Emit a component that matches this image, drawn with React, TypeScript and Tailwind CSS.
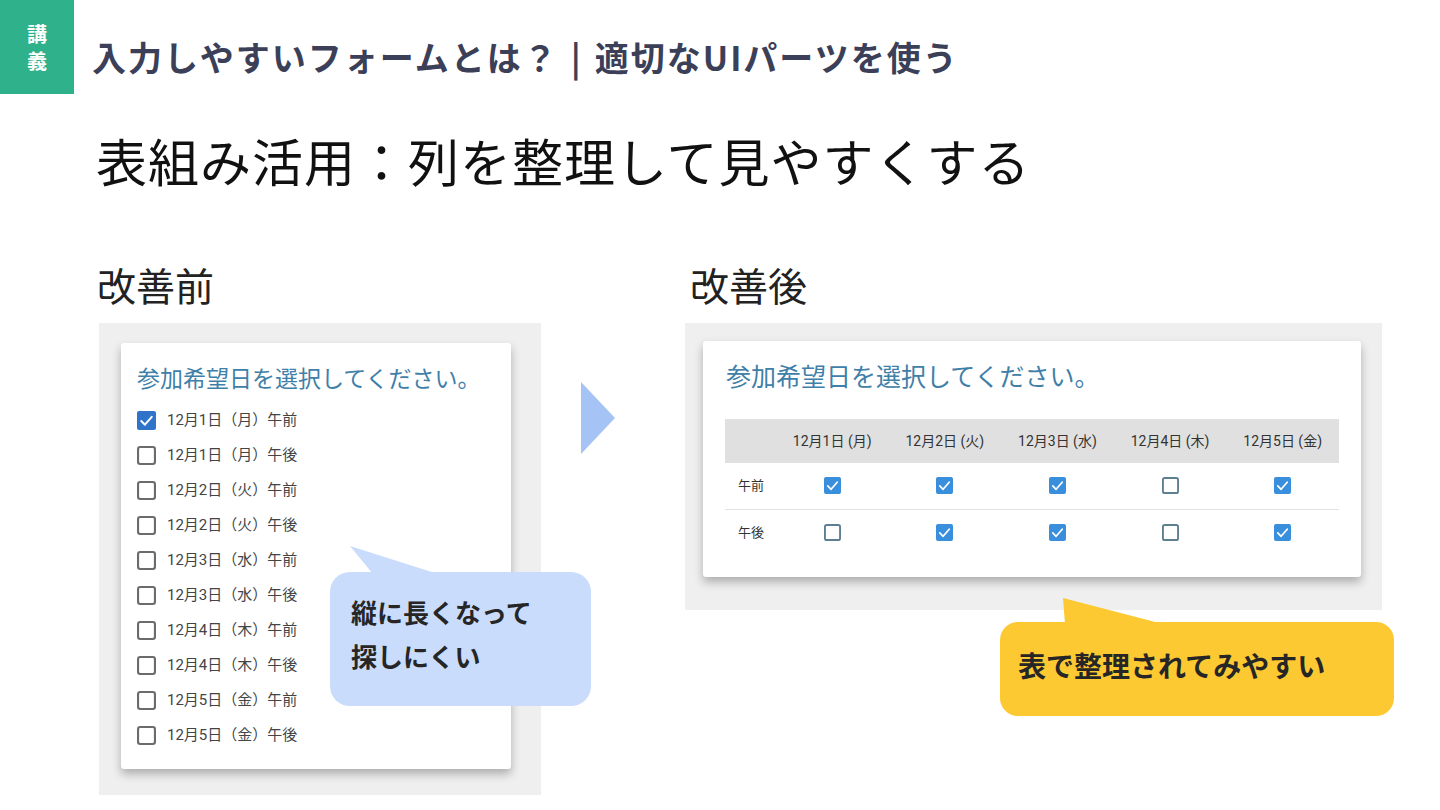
const jp = { fontFamily: '"Noto Sans CJK JP", "Noto Sans", sans-serif' }
const ui = { fontFamily: 'Roboto, "Noto Sans CJK JP", sans-serif' }

const listItems = [
  { label: '12月1日（月）午前', checked: true },
  { label: '12月1日（月）午後', checked: false },
  { label: '12月2日（火）午前', checked: false },
  { label: '12月2日（火）午後', checked: false },
  { label: '12月3日（水）午前', checked: false },
  { label: '12月3日（水）午後', checked: false },
  { label: '12月4日（木）午前', checked: false },
  { label: '12月4日（木）午後', checked: false },
  { label: '12月5日（金）午前', checked: false },
  { label: '12月5日（金）午後', checked: false }
]

const days = ['12月1日 (月)', '12月2日 (火)', '12月3日 (水)', '12月4日 (木)', '12月5日 (金)']
const rows = [
  { label: '午前', values: [true, true, true, false, true] },
  { label: '午後', values: [false, true, true, false, true] }
]

function Check({ checked, size, on, off }: { checked: boolean; size: number; on: string; off: string }) {
  return (
    <svg width={size} height={size} viewBox="0 0 18 18" className="shrink-0">
      {checked ? (
        <>
          <rect x="0" y="0" width="18" height="18" rx="2" fill={on} />
          <polyline points="4,9.5 7.5,13 14,5.5" fill="none" stroke="#fff" strokeWidth="1.8" strokeLinecap="round" strokeLinejoin="round" />
        </>
      ) : (
        <rect x="1" y="1" width="16" height="16" rx="2" fill="#fff" stroke={off} strokeWidth="2" />
      )}
    </svg>
  )
}

export default function App() {
  return (
    <div className="relative w-[1440px] h-[810px] bg-white overflow-hidden" style={jp}>
      {/* ヘッダー */}
      <div className="flex h-[94px]">
        <div className="w-[74px] h-[94px] bg-[#2fb18b] flex flex-col items-center justify-center text-white font-bold text-[20px] leading-[27px]">
          <span>講</span>
          <span>義</span>
        </div>
        <div className="pl-[18px] pt-[36px] text-[34px] leading-[42px] font-bold text-[#3c3f58] tracking-[2px] whitespace-nowrap flex items-center self-start">
          <span>入力しやすいフォームとは？</span>
          <span className="ml-[12px] mr-[12px]">|</span>
          <span>適切なUIパーツを使う</span>
        </div>
      </div>

      <h1 className="pl-[96px] mt-[40px] text-[51px] leading-[52px] text-[#111] tracking-[1px]">
        表組み活用：列を整理して見やすくする
      </h1>

      <div className="flex mt-[78px] pl-[97px]">
        {/* 改善前 */}
        <div className="flex flex-col">
          <div className="text-[39px] leading-[40px] text-[#222]">改善前</div>
          <div className="mt-[19px] ml-[2px] w-[442px] h-[472px] bg-[#efefef] pt-[20px] pl-[22px]">
            <div className="w-[390px] h-[426px] bg-white rounded-[3px] shadow-[0_5px_10px_rgba(0,0,0,0.28)] pt-[22px] px-[16px]" style={ui}>
              <div className="text-[23px] leading-[29px] text-[#3f80a8]">参加希望日を選択してください。</div>
              <div className="mt-[9px] flex flex-col">
                {listItems.map((item) => (
                  <div key={item.label} className="h-[35px] flex items-center gap-[11px]">
                    <Check checked={item.checked} size={19} on="#2f74c9" off="#6b6b6b" />
                    <span className="text-[15px] text-[#444]">{item.label}</span>
                  </div>
                ))}
              </div>
            </div>
          </div>
        </div>

        {/* 矢印 */}
        <div className="w-[144px] flex pt-[118px] pl-[40px]">
          <svg width="34" height="72" viewBox="0 0 34 72">
            <polygon points="0,0 34,36 0,72" fill="#a5c3f5" />
          </svg>
        </div>

        {/* 改善後 */}
        <div className="flex flex-col">
          <div className="ml-[5px] text-[39px] leading-[40px] text-[#222]">改善後</div>
          <div className="mt-[19px] w-[697px] h-[287px] bg-[#efefef] pt-[18px] pl-[18px]">
            <div className="w-[658px] h-[236px] bg-white rounded-[3px] shadow-[0_5px_10px_rgba(0,0,0,0.28)] pt-[21px] px-[22px]" style={ui}>
              <div className="pl-[1px] text-[25px] leading-[31px] text-[#3f80a8]">参加希望日を選択してください。</div>
              <table className="mt-[26px] w-[614px] border-collapse">
                <thead>
                  <tr className="bg-[#e0e0e0] h-[44px]">
                    <th className="w-[51px]"></th>
                    {days.map((d) => (
                      <th key={d} className="w-[113px] text-[14px] font-normal text-[#333] text-center">{d}</th>
                    ))}
                  </tr>
                </thead>
                <tbody>
                  {rows.map((r, i) => (
                    <tr key={r.label} className={i === 0 ? 'h-[46px] border-b border-[#e2e2e2]' : 'h-[46px]'}>
                      <td className="pl-[13px] text-[13px] text-[#333]">{r.label}</td>
                      {r.values.map((v, j) => (
                        <td key={j} className="text-center">
                          <div className="flex justify-center">
                            <Check checked={v} size={17} on="#3a8fdc" off="#5d7f90" />
                          </div>
                        </td>
                      ))}
                    </tr>
                  ))}
                </tbody>
              </table>
            </div>
          </div>
        </div>
      </div>

      {/* 吹き出し：青 */}
      <svg className="absolute left-[348px] top-[545px]" width="92" height="30" viewBox="0 0 92 30">
        <polygon points="2,1 25,29 90,29" fill="#c9dcfb" />
      </svg>
      <div className="absolute left-[330px] top-[572px] w-[261px] h-[134px] rounded-[20px] bg-[#c9dcfb] pl-[21px] pt-[18px] text-[26px] leading-[44px] font-bold text-[#262626]">
        <div>縦に長くなって</div>
        <div>探しにくい</div>
      </div>

      {/* 吹き出し：黄 */}
      <svg className="absolute left-[1061px] top-[597px]" width="104" height="28" viewBox="0 0 104 28">
        <polygon points="2,1 4,27 102,27" fill="#fdc932" />
      </svg>
      <div className="absolute left-[1000px] top-[622px] w-[394px] h-[94px] rounded-[18px] bg-[#fdc932] pl-[18px] pb-[8px] flex items-center text-[28px] font-bold text-[#262626]">
        表で整理されてみやすい
      </div>
    </div>
  )
}
